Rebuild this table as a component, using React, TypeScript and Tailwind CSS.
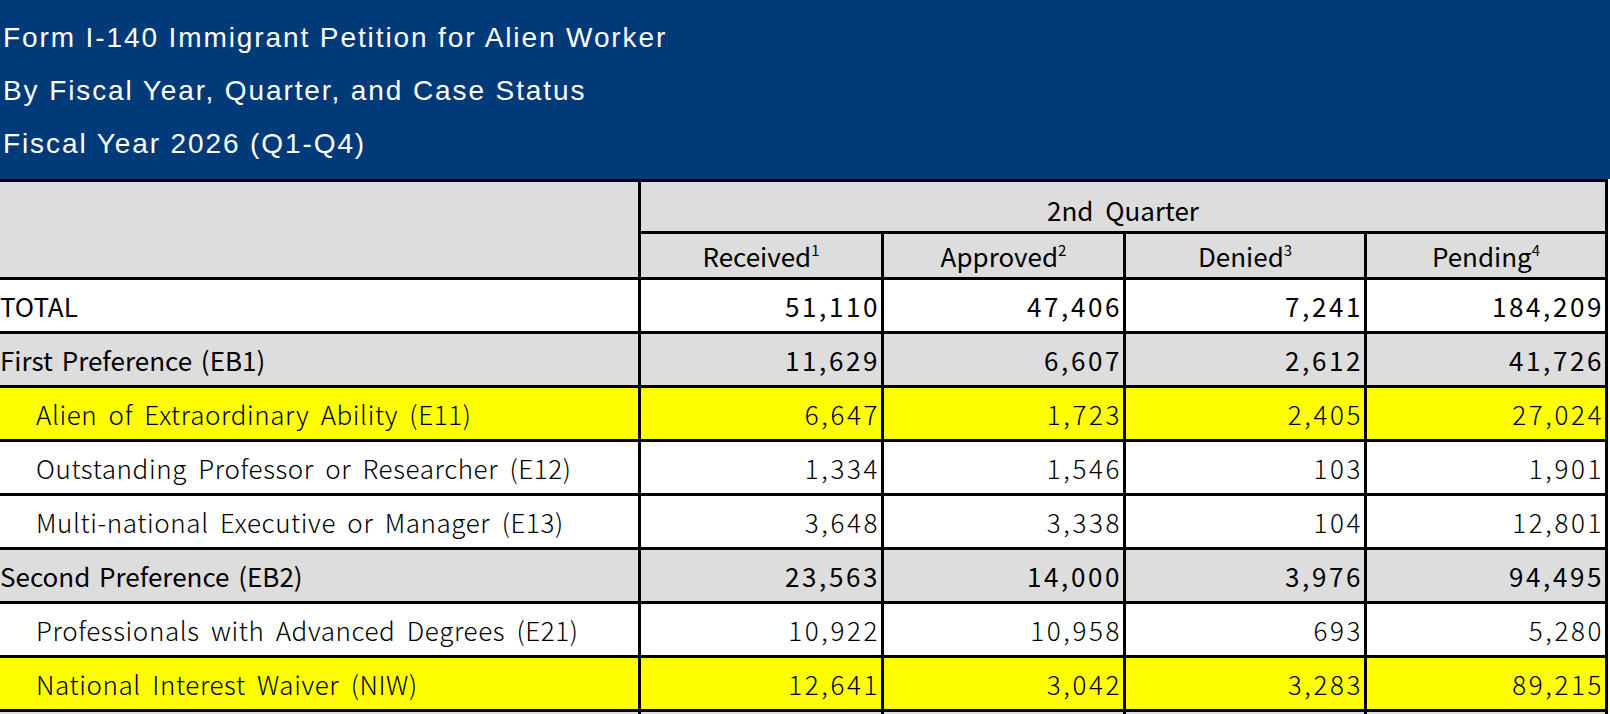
import React from "react";

type Row = {
  label: string;
  v: string[];
  bg: string;
  bold: boolean;
  indent: boolean;
};

const rows: Row[] = [
  { label: "TOTAL", v: ["51,110", "47,406", "7,241", "184,209"], bg: "bg-white", bold: true, indent: false },
  { label: "First Preference (EB1)", v: ["11,629", "6,607", "2,612", "41,726"], bg: "bg-[#dddddd]", bold: true, indent: false },
  { label: "Alien of Extraordinary Ability (E11)", v: ["6,647", "1,723", "2,405", "27,024"], bg: "bg-[#ffff00]", bold: false, indent: true },
  { label: "Outstanding Professor or Researcher (E12)", v: ["1,334", "1,546", "103", "1,901"], bg: "bg-white", bold: false, indent: true },
  { label: "Multi-national Executive or Manager (E13)", v: ["3,648", "3,338", "104", "12,801"], bg: "bg-white", bold: false, indent: true },
  { label: "Second Preference (EB2)", v: ["23,563", "14,000", "3,976", "94,495"], bg: "bg-[#dddddd]", bold: true, indent: false },
  { label: "Professionals with Advanced Degrees (E21)", v: ["10,922", "10,958", "693", "5,280"], bg: "bg-white", bold: false, indent: true },
  { label: "National Interest Waiver (NIW)", v: ["12,641", "3,042", "3,283", "89,215"], bg: "bg-[#ffff00]", bold: false, indent: true },
];

const baseFont = "font-['Noto_Sans_CJK_JP',sans-serif] text-[26px] text-black leading-none";

function Head({ text, sup }: { text: string; sup: string }) {
  return (
    <div className={`bg-[#dddddd] flex items-end justify-center pb-[8px] ${baseFont}`}>
      <span className="whitespace-nowrap">
        {text}
        <span className="text-[15px] relative top-[-11px]">{sup}</span>
      </span>
    </div>
  );
}

export default function App() {
  return (
    <div className="w-[1610px] bg-white">
      <div className="bg-[#003a78] text-white pl-[3px] pt-[11px] pb-[9px] text-[28px] tracking-[1.9px] leading-[53px] font-['Liberation_Sans',Arial,sans-serif]">
        <div>Form I-140 Immigrant Petition for Alien Worker</div>
        <div>By Fiscal Year, Quarter, and Case Status</div>
        <div>Fiscal Year 2026 (Q1-Q4)</div>
      </div>
      <div className="w-[1608px] bg-black pt-[3px] pr-[3px] pb-[3px] grid grid-cols-[638px_240px_239px_238px_238px] grid-rows-[49px_43px_repeat(9,51px)] gap-[3px]">
        <div className="row-span-2 bg-[#dddddd]" />
        <div className={`col-span-4 bg-[#dddddd] flex items-end justify-center pb-[8px] [word-spacing:6px] ${baseFont}`}>
          2nd Quarter
        </div>
        <Head text="Received" sup="1" />
        <Head text="Approved" sup="2" />
        <Head text="Denied" sup="3" />
        <Head text="Pending" sup="4" />
        {rows.map((r) => (
          <React.Fragment key={r.label}>
            <div
              className={`${r.bg} flex items-end pb-[12px] whitespace-nowrap ${baseFont} ${
                r.indent ? "pl-[36px]" : "pl-0"
              } ${r.bold ? "font-normal [word-spacing:3px]" : "font-light tracking-[0.6px] [word-spacing:5px]"}`}
            >
              {r.label}
            </div>
            {r.v.map((n, i) => (
              <div
                key={i}
                className={`${r.bg} flex items-end justify-end pr-[1px] pb-[12px] tracking-[2.6px] ${baseFont} ${
                  r.bold ? "font-normal" : "font-light"
                }`}
              >
                {n}
              </div>
            ))}
          </React.Fragment>
        ))}
        <div className="bg-[#dddddd]" />
        <div className="bg-[#dddddd]" />
        <div className="bg-[#dddddd]" />
        <div className="bg-[#dddddd]" />
        <div className="bg-[#dddddd]" />
      </div>
    </div>
  );
}
